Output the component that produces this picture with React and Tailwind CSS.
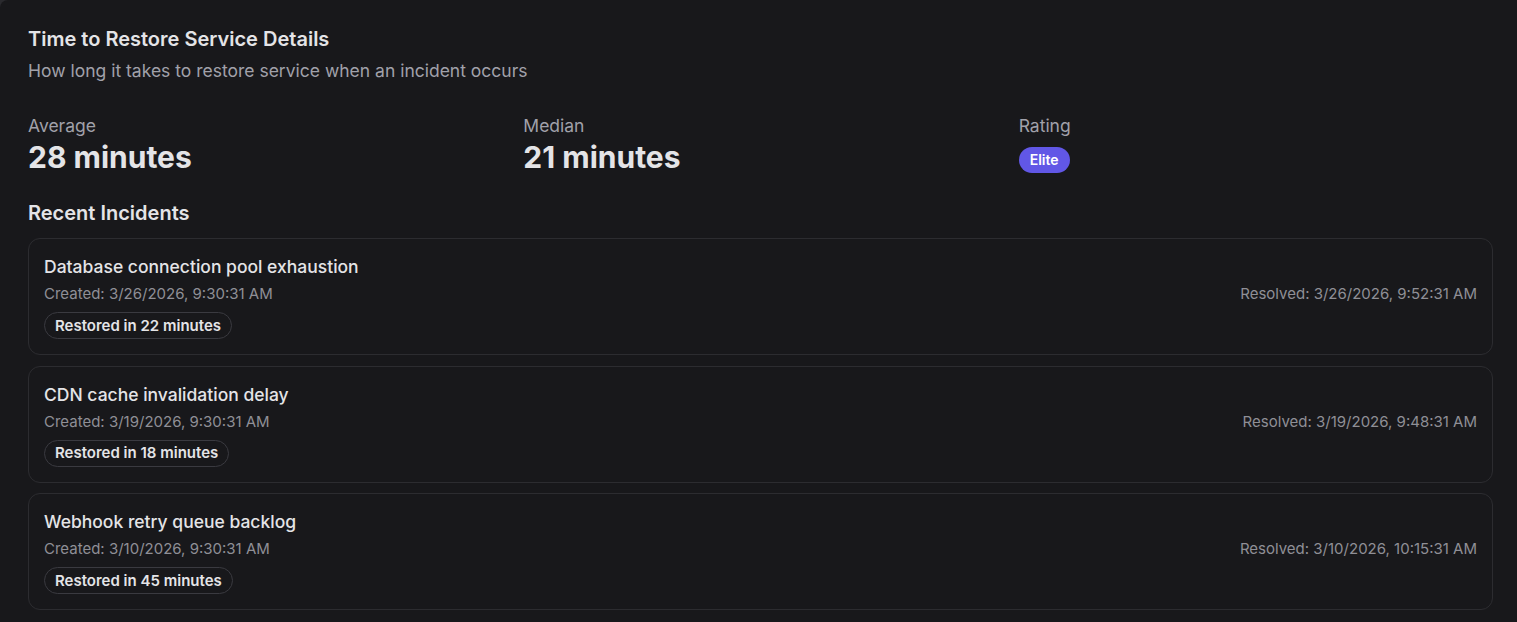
import React from 'react';

const incidents = [
  {
    title: 'Database connection pool exhaustion',
    created: '3/26/2026, 9:30:31 AM',
    resolved: '3/26/2026, 9:52:31 AM',
    minutes: 22,
  },
  {
    title: 'CDN cache invalidation delay',
    created: '3/19/2026, 9:30:31 AM',
    resolved: '3/19/2026, 9:48:31 AM',
    minutes: 18,
  },
  {
    title: 'Webhook retry queue backlog',
    created: '3/10/2026, 9:30:31 AM',
    resolved: '3/10/2026, 10:15:31 AM',
    minutes: 45,
  },
];

function Stat({ label, children }) {
  return (
    <div>
      <div className="text-[17.5px] leading-6 text-[#a1a1aa]">{label}</div>
      {children}
    </div>
  );
}

function IncidentCard({ item }) {
  return (
    <div className="rounded-xl border border-[#2c2c30] px-[15px] pt-4 pb-[15px]">
      <div className="text-[17.5px] leading-6 font-medium text-[#e4e4e7]">{item.title}</div>
      <div className="mt-[5px] flex items-center justify-between text-[15px] leading-5 text-[#8f8f96]">
        <span>Created: {item.created}</span>
        <span>Resolved: {item.resolved}</span>
      </div>
      <div className="mt-2">
        <span className="inline-flex items-center rounded-full border border-[#3a3a40] px-2.5 py-[2.5px] text-[15px] leading-5 font-semibold text-[#e4e4e7]">
          Restored in {item.minutes} minutes
        </span>
      </div>
    </div>
  );
}

export default function App() {
  return (
    <div className="h-[622px] overflow-hidden bg-[#2a2a2e]" style={{ fontFamily: 'Inter, "Noto Sans", sans-serif' }}>
      <div className="h-[700px] rounded-tl-lg bg-[#18181b] pl-7 pr-6 pt-[25px]">
        <h2 className="text-[20px] leading-7 font-semibold text-[#e4e4e7]">Time to Restore Service Details</h2>
        <p className="mt-[6px] text-[17.5px] leading-6 text-[#a1a1aa]">How long it takes to restore service when an incident occurs</p>

        <div className="mt-[31px] grid grid-cols-3 gap-[21px]">
          <Stat label="Average">
            <div className="mt-px text-3xl leading-9 font-bold text-[#e4e4e7]">28 minutes</div>
          </Stat>
          <Stat label="Median">
            <div className="mt-px text-3xl leading-9 font-bold text-[#e4e4e7]">21 minutes</div>
          </Stat>
          <Stat label="Rating">
            <span className="mt-[9px] inline-flex items-center rounded-full bg-[#6157e6] px-[11px] py-[3px] text-sm leading-5 font-semibold text-white">
              Elite
            </span>
          </Stat>
        </div>

        <h3 className="mt-6 text-[20px] leading-7 font-semibold text-[#e4e4e7]">Recent Incidents</h3>
        <div className="mt-[11px] space-y-[10.5px]">
          {incidents.map((item) => (
            <IncidentCard key={item.title} item={item} />
          ))}
        </div>
      </div>
    </div>
  );
}
